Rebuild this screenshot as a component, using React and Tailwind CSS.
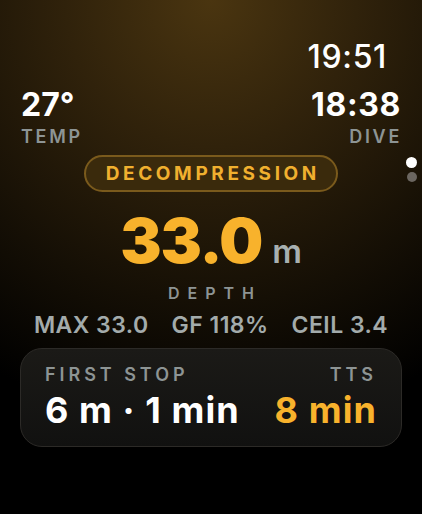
export default function App() {
  return (
    <div className="relative flex h-[514px] w-full flex-col overflow-hidden bg-black bg-[radial-gradient(ellipse_115%_95%_at_50%_0%,#4a3510_0%,#30220b_30%,#150f05_62%,#000_88%)] font-['Inter',sans-serif] text-white">
      <div className="flex justify-end pr-[35px] pt-[41px]">
        <span className="text-[32px] leading-none font-medium tracking-[0.02em]">19:51</span>
      </div>

      <div className="mt-4 flex justify-between px-[21px]">
        <div className="flex flex-col items-start">
          <span className="text-[32px] leading-none font-bold">27°</span>
          <span className="mt-[7px] text-[18px] leading-none font-semibold tracking-[0.15em] text-[#8d9494]">TEMP</span>
        </div>
        <div className="flex flex-col items-end">
          <span className="text-[32px] leading-none font-bold tracking-[0.02em]">18:38</span>
          <span className="mt-[7px] mr-[-1px] text-[18px] leading-none font-semibold tracking-[0.15em] text-[#8d9494]">DIVE</span>
        </div>
      </div>

      <div className="mt-[9px] flex justify-center">
        <div className="flex h-[37px] w-[254px] items-center justify-center rounded-full border-2 border-[#7a5a1c] bg-[#3a2a0c]">
          <span className="pl-[0.19em] text-[19px] leading-none font-bold tracking-[0.19em] text-[#f0b02f]">DECOMPRESSION</span>
        </div>
      </div>

      <div className="absolute right-[5px] top-[157px] flex flex-col items-center gap-[4px]">
        <span className="h-[11px] w-[11px] rounded-full bg-white" />
        <span className="h-[10px] w-[10px] rounded-full bg-[#6b6660]" />
      </div>

      <div className="mt-[18px] flex items-baseline justify-center gap-[10px]">
        <span className="text-[62px] leading-none font-black tracking-[-0.02em] text-[#f8b22c]">33.0</span>
        <span className="text-[33px] leading-none font-semibold text-[#a8b0b0]">m</span>
      </div>

      <div className="mt-[13px] flex justify-center">
        <span className="pl-[0.5em] text-[16px] leading-none font-semibold tracking-[0.5em] text-[#8d9494]">DEPTH</span>
      </div>

      <div className="mt-[13px] flex justify-center gap-[23px] text-[23px] leading-none font-semibold tracking-[0.02em] text-[#a3abab]">
        <span>MAX 33.0</span>
        <span>GF 118%</span>
        <span>CEIL 3.4</span>
      </div>

      <div className="mx-[20px] mt-[11px] flex h-[99px] justify-between rounded-[22px] border border-[#2c2a27] bg-[linear-gradient(180deg,#1b1a17,#111110)] px-[24px] pt-[17px]">
        <div className="flex flex-col items-start">
          <span className="text-[18px] leading-none font-semibold tracking-[0.22em] text-[#8d9494]">FIRST STOP</span>
          <span className="mt-[8px] text-[36px] leading-none font-bold tracking-[0.03em]">6 m · 1 min</span>
        </div>
        <div className="flex flex-col items-end">
          <span className="text-[18px] leading-none font-semibold tracking-[0.22em] text-[#8d9494]">TTS</span>
          <span className="mt-[8px] text-[36px] leading-none font-bold tracking-[0.03em] text-[#f8b22c]">8 min</span>
        </div>
      </div>
    </div>
  );
}
